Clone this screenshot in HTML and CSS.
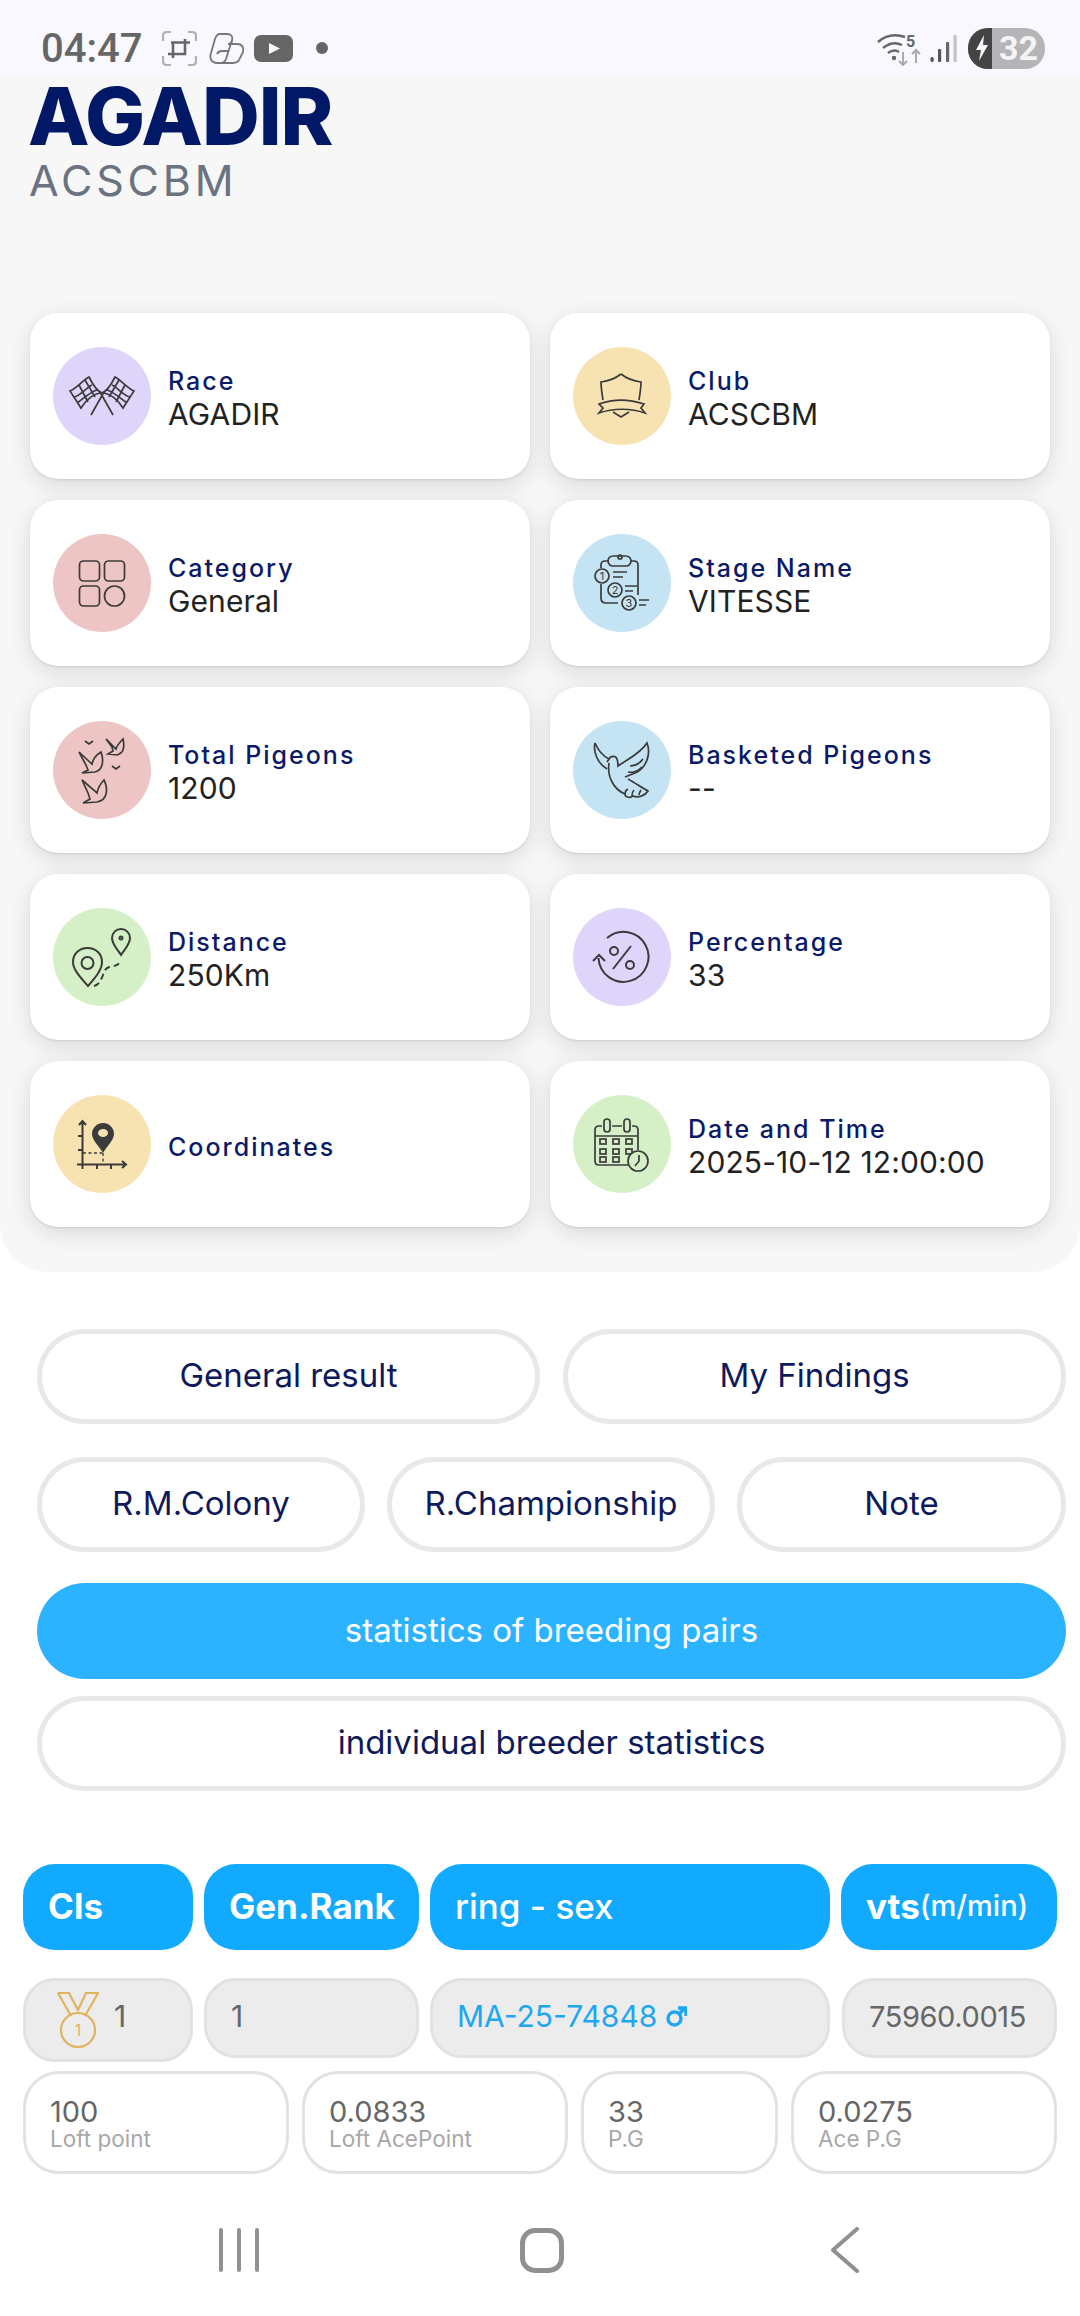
FILE: index.html
```html
<!DOCTYPE html>
<html lang="en">
<head>
    <meta charset="UTF-8">
    <meta name="viewport" content="width=device-width, initial-scale=1.0">
    <title>AGADIR</title>
    <link rel="stylesheet" href="styles.css">
</head>
<body>
    <div class="status">
        <div class="status-left">
            <span class="time">04:47</span>
            <svg class="st-shot" viewBox="0 0 35 35" fill="none" stroke="#666">
                <path d="M1 10V5q0-4 4-4h4M26 1h4q4 0 4 4v5M34 25v5q0 4-4 4h-4M9 34H5q-4 0-4-4v-5" stroke="#b0b0b0" stroke-width="2.200"/>
                <path d="M9 11.500h19M23 8v16M6 23h18M11 11v16" stroke-width="2.600"/>
            </svg>
            <svg class="st-copilot" viewBox="0 0 35 31" fill="none" stroke="#777" stroke-width="1.800">
                <path d="M11 1h7c4 0 6 2 5 6l-6 19c-1 3-3 4-6 4H8c-5 0-8-4-6-10L6 6c1-3 3-5 5-5z"/>
                <path d="M19 11h9c5 0 7 3 6 8l-3 6c-1 3-3 5-7 5H11"/>
                <path d="M23 7c0 3-2 4-4 4M8 21c1-2 3-3 5-3h6"/>
            </svg>
            <svg class="st-yt" viewBox="0 0 39 27"><rect width="39" height="27" rx="7" fill="#666"/><path d="M15 8l11 5.500-11 5.500z" fill="#f8f8fe"/></svg>
            <i class="st-dot"></i>
        </div>
        <div class="status-right">
            <svg class="st-wifi" viewBox="0 0 44 36" fill="none" stroke="#666" stroke-width="2.400">
                <path d="M1 12C9 5 19 4 28 7M6 18c6-5 13-6 19-3M11 23c4-3 8-3 11-1"/>
                <circle cx="17" cy="28" r="2.200" fill="#666" stroke="none"/>
                <text x="29" y="17" class="st-five">5</text>
                <path d="M26 22v13M22 31l4 4 4-4" stroke="#aaa" stroke-width="2"/>
                <path d="M39 33V20M35 24l4-4 4 4" stroke="#aaa" stroke-width="2"/>
            </svg>
            <svg class="st-signal" viewBox="0 0 27 27" fill="#555">
                <rect x="0.500" y="22" width="3.200" height="5" rx="1.500"/>
                <rect x="8" y="14" width="3.200" height="13" rx="1"/>
                <rect x="16" y="7" width="3.200" height="20" rx="1" fill="#666"/>
                <rect x="23.500" y="0" width="3.200" height="27" rx="1" fill="#c2c2c2"/>
            </svg>
            <div class="battery">
                <span class="bat-bolt">
                    <svg viewBox="0 0 14 26" width="14" height="26"><path d="M9 0L1 15h5l-2 11 9-16H8z" fill="#f8f8fe"/></svg>
                </span>
                <span class="bat-num">32</span>
            </div>
        </div>
    </div>

    <div class="top">
        <h1 class="title">AGADIR</h1>
        <div class="subtitle">ACSCBM</div>

        <div class="cards">
            <div class="card">
                <div class="circle purple">
                    <svg viewBox="0 0 98 98" class="ico">
                        <path d="M38 68L51 45M60 68L47 45"/>
                        <path d="M17 44c7-3 12-10 19-14 3 6 7 14 13 16-7 0-16 6-21 15zM26 38l9 17M32 33l10 17M20.500 50c7-1 12-9 18.500-12M24 56c6-4 13-11 20-13"/>
                        <path d="M81 44c-7-3-12-10-19-14-3 6-7 14-13 16 7 0 16 6 21 15zM72 38l-9 17M66 33L56 50M77.500 50c-7-1-12-9-18.500-12M74 56c-6-4-13-11-20-13"/>
                    </svg>
                </div>
                <div class="info"><div class="label">Race</div><div class="value">AGADIR</div></div>
            </div>
            <div class="card">
                <div class="circle yellow">
                    <svg viewBox="0 0 98 98" class="ico">
                        <path d="M48 27c-5 4-12 7-20 8 0 6 1 12 2 18M48 27c5 4 12 7 20 8 0 6-1 12-2 18"/>
                        <path d="M26 57c14-5 30-5 45 0l-3 4 4 5c-14-5-32-5-46 0l4-5z"/>
                        <path d="M40 65l8 5 8-5"/>
                    </svg>
                </div>
                <div class="info"><div class="label">Club</div><div class="value">ACSCBM</div></div>
            </div>

            <div class="card">
                <div class="circle pink">
                    <svg viewBox="0 0 98 98" class="ico">
                        <rect x="26.500" y="27" width="20" height="20" rx="4"/>
                        <rect x="51.500" y="27" width="20" height="20" rx="4"/>
                        <rect x="26.500" y="52" width="20" height="20" rx="4"/>
                        <circle cx="61.500" cy="62" r="10"/>
                    </svg>
                </div>
                <div class="info"><div class="label">Category</div><div class="value">General</div></div>
            </div>
            <div class="card">
                <div class="circle blue">
                    <svg viewBox="0 0 98 98" class="ico">
                        <path d="M36 27h-4q-4 0-4 4v3M58 27h3q4 0 4 4v30M28 50v14q0 5 5 5h12"/>
                        <rect x="35" y="22" width="23" height="10" rx="5"/>
                        <circle cx="47" cy="23" r="2"/>
                        <circle cx="29" cy="42" r="7"/>
                        <circle cx="42" cy="56" r="7"/>
                        <circle cx="56" cy="69" r="7"/>
                        <text x="29" y="46" class="ico-num">1</text>
                        <text x="42" y="60" class="ico-num">2</text>
                        <text x="56" y="73" class="ico-num">3</text>
                        <path d="M40 38h14M40 43h10M52 52h12M52 57h8M66 66h10M66 71h7"/>
                    </svg>
                </div>
                <div class="info"><div class="label">Stage Name</div><div class="value">VITESSE</div></div>
            </div>

            <div class="card">
                <div class="circle pink">
                    <svg viewBox="0 0 98 98" class="ico">
                        <path d="M26 31l13 12c1-5 4-9 9-12 2 5 2 9 1 13-1 4-3 6-7 7l-13 1 6-3-2-5z"/>
                        <path d="M53 18l10 10c1-4 4-7 7-10 1 4 1 8 0 11-1 3-3 4-6 5l-9-1 5-3-1-4z"/>
                        <path d="M29 59l15 13c1-5 3-9 7-13 3 6 3 10 2 14-1 5-4 7-9 8l-14 1 7-4-2-6z"/>
                        <path d="M32 20l4 3 4-3M59 45l4 3 4-3"/>
                    </svg>
                </div>
                <div class="info"><div class="label">Total Pigeons</div><div class="value">1200</div></div>
            </div>
            <div class="card">
                <div class="circle blue">
                    <svg viewBox="0 0 98 98" class="ico">
                        <path d="M22 22c-2 8 2 20 12 26M22 22c3 7 8 13 14 16"/>
                        <path d="M34 41l2-3c2-4 7-3 8 0 1 3 1 5 1 7 10-7 23-13 29-23 4 10 0 25-12 30l-10 4"/>
                        <path d="M36 42c-2 13 4 26 16 31 0 4 6 4 8 2 5 2 12 0 15-5-7-4-13-8-20-12"/>
                        <path d="M57 45c5 0 10-3 13-7M55 51c5 1 10-1 14-5M52 73c0-2 1-4 3-5M59 75c0-3 1-5 2-6M66 74c0-2 1-3 2-5"/>
                    </svg>
                </div>
                <div class="info"><div class="label">Basketed Pigeons</div><div class="value">--</div></div>
            </div>

            <div class="card">
                <div class="circle green">
                    <svg viewBox="0 0 98 98" class="ico thick">
                        <path d="M35 78C28 70 20 62 20 54c0-8 6-14 14.500-14S49 46 49 54c0 8-7 16-14 24z"/>
                        <circle cx="34.500" cy="55" r="6"/>
                        <path d="M68 47c-4-6-9-11-9-17 0-5 4-9 9-9s9 4 9 9c0 6-5 11-9 17z"/>
                        <circle cx="68" cy="30" r="1.500"/>
                        <path d="M41 78c5-1 7-6 9-11 1-6 5-8 9-9 4 0 7-1 9-6" stroke-dasharray="6 4"/>
                    </svg>
                </div>
                <div class="info"><div class="label">Distance</div><div class="value">250Km</div></div>
            </div>
            <div class="card">
                <div class="circle purple">
                    <svg viewBox="0 0 98 98" class="ico thick">
                        <path d="M34 30A25 25 0 1 1 25.500 50"/>
                        <path d="M20 53l6-6 6 6"/>
                        <circle cx="41" cy="43" r="4"/>
                        <circle cx="57" cy="57" r="4"/>
                        <path d="M58 38L40 61"/>
                    </svg>
                </div>
                <div class="info"><div class="label">Percentage</div><div class="value">33</div></div>
            </div>

            <div class="card">
                <div class="circle yellow">
                    <svg viewBox="0 0 98 98" class="ico thick">
                        <path d="M29.500 74V26M26 30l3.500-4 3.500 4M24 69.500h49M69 66l4 3.500-4 3.500M25 41h5M25 55h5M44 69v5M58 69v5"/>
                        <path d="M30 58h20M50 58v10" stroke-dasharray="3 2.500" stroke-width="1.300"/>
                        <path d="M50 56c-5-8-10-11-10-17a10 10 0 0 1 20 0c0 6-5 9-10 17z" fill="#3b3b3b"/>
                        <ellipse cx="50" cy="38" rx="5" ry="4" fill="#f7e3b1" stroke="none"/>
                    </svg>
                </div>
                <div class="info"><div class="label">Coordinates</div></div>
            </div>
            <div class="card">
                <div class="circle green">
                    <svg viewBox="0 0 98 98" class="ico">
                        <path d="M29 31h-3q-4 0-4 4v31q0 4 4 4h30M39 31h10M59 31h2q4 0 4 4v20M22 41h43"/>
                        <rect x="31" y="24" width="6" height="13" rx="3"/>
                        <rect x="51" y="24" width="6" height="13" rx="3"/>
                        <rect x="27" y="44" width="6" height="5"/><rect x="40" y="44" width="6" height="5"/><rect x="53" y="44" width="6" height="5"/>
                        <rect x="27" y="54" width="6" height="5"/><rect x="40" y="54" width="6" height="5"/><rect x="53" y="54" width="6" height="5"/>
                        <rect x="27" y="62" width="6" height="5"/><rect x="40" y="62" width="6" height="5"/>
                        <circle cx="65" cy="66" r="10" fill="#d5f0c6"/>
                        <path d="M66 60v6l-4 5"/>
                    </svg>
                </div>
                <div class="info"><div class="label">Date and Time</div><div class="value">2025-10-12 12:00:00</div></div>
            </div>
        </div>
    </div>

    <div class="actions">
        <div class="btn-row">
            <div class="btn">General result</div>
            <div class="btn">My Findings</div>
        </div>
        <div class="btn-row three">
            <div class="btn">R.M.Colony</div>
            <div class="btn">R.Championship</div>
            <div class="btn">Note</div>
        </div>
        <div class="btn active">statistics of breeding pairs</div>
        <div class="btn lower">individual breeder statistics</div>
    </div>

    <div class="table">
        <div class="thead">
            <div class="th bold">Cls</div>
            <div class="th bold">Gen.Rank</div>
            <div class="th">ring - sex</div>
            <div class="th bold vts">vts<small>(m/min)</small></div>
        </div>
        <div class="trow">
            <div class="td medal-cell">
                <svg class="medal" viewBox="0 0 42 56" fill="none" stroke="#e0b35e" stroke-width="2.200">
                    <path d="M1 1h11l9 17 8-17h12L28 24M1 1l13 23"/>
                    <circle cx="21" cy="38" r="17"/>
                    <text x="21" y="44" class="medal-num">1</text>
                </svg>
                <span>1</span>
            </div>
            <div class="td">1</div>
            <div class="td ring">MA-25-74848
                <svg class="male" viewBox="0 0 21 21" fill="none" stroke="#1ea7f0" stroke-width="3.400">
                    <circle cx="8.500" cy="12.500" r="6.500"/>
                    <path d="M13 8l6-6M12 2h8v8"/>
                </svg>
            </div>
            <div class="td speed">75960.0015</div>
        </div>
        <div class="tstats">
            <div class="stat"><div class="stat-val">100</div><div class="stat-lbl">Loft point</div></div>
            <div class="stat"><div class="stat-val">0.0833</div><div class="stat-lbl">Loft AcePoint</div></div>
            <div class="stat"><div class="stat-val">33</div><div class="stat-lbl">P.G</div></div>
            <div class="stat"><div class="stat-val">0.0275</div><div class="stat-lbl">Ace P.G</div></div>
        </div>
    </div>

    <div class="navbar">
        <svg class="nav-recent" viewBox="0 0 42 44" fill="none" stroke="#909090" stroke-width="4" stroke-linecap="round">
            <path d="M3 2v40M21 2v40M39 2v40"/>
        </svg>
        <i class="nav-home"></i>
        <svg class="nav-back" viewBox="0 0 28 46" fill="none" stroke="#909090" stroke-width="4" stroke-linecap="round" stroke-linejoin="round">
            <path d="M26 2L2 23l24 21"/>
        </svg>
    </div>
</body>
</html>
```

FILE: styles.css
```css
*{
    padding: 0;
    margin: 0;
    box-sizing: border-box;
}
body{
    width: 1080px;
    height: 2316px;
    background: #fff;
    font-family: "Inter", "Noto Sans", sans-serif;
    overflow: hidden;
}

/* status bar */
.status{
    height: 76px;
    background: #f8f8fe;
    display: flex;
    justify-content: space-between;
    align-items: center;
    padding: 20px 35px 0 41px;
}
.status-left, .status-right{
    display: flex;
    align-items: center;
}
.time{
    font-family: "Roboto", sans-serif;
    font-size: 40px;
    font-weight: 500;
    color: #666;
    width: 121px;
}
.st-shot{ width: 35px; height: 35px; margin-right: 12px; }
.st-copilot{ width: 35px; height: 31px; margin-right: 10px; }
.st-yt{ width: 39px; height: 27px; margin-right: 23px; }
.st-dot{ width: 12px; height: 12px; border-radius: 50%; background: #666; }
.st-wifi{ width: 44px; height: 36px; margin-right: 9px; }
.st-signal{ width: 27px; height: 27px; margin-right: 11px; }
.st-five{ font-family: "Roboto", sans-serif; font-size: 16px; font-weight: 700; fill: #666; stroke: none; }
.battery{
    width: 77px;
    height: 41px;
    border-radius: 20px;
    overflow: hidden;
    display: flex;
    background: #b5b5b8;
}
.bat-bolt{
    width: 24px;
    background: #444;
    display: flex;
    align-items: center;
    justify-content: center;
    padding-left: 3px;
}
.bat-num{
    flex: 1;
    font-family: "Roboto", sans-serif;
    font-size: 34px;
    font-weight: 700;
    line-height: 41px;
    color: #f4f4f6;
    text-align: center;
}

/* top panel */
.top{
    height: 1196px;
    background: #f7f7f7;
    border-radius: 0 0 48px 48px;
    padding: 0 30px;
}
.title{
    font-size: 80px;
    font-weight: 800;
    line-height: 80px;
    color: #001866;
    letter-spacing: -1px;
    margin-left: -2px;
}
.subtitle{
    font-size: 43px;
    font-weight: 400;
    line-height: 44px;
    margin: 2px 0 0 -1px;
    color: #6b7280;
    letter-spacing: 3.800px;
}
.cards{
    display: grid;
    grid-template-columns: 500px 500px;
    grid-auto-rows: 166px;
    gap: 21px 20px;
    margin-top: 111px;
}
.card{
    background: #fff;
    border-radius: 28px;
    box-shadow: 0 1px 2px rgba(20, 20, 40, .1), 0 6px 22px rgba(20, 20, 40, .13);
    display: flex;
    align-items: center;
    padding-left: 23px;
}
.circle{
    width: 98px;
    height: 98px;
    border-radius: 50%;
    flex-shrink: 0;
}
.purple{ background: #dfd5fb; }
.yellow{ background: #f7e3b1; }
.pink{ background: #edc5c5; }
.blue{ background: #c4e3f3; }
.green{ background: #d5f0c6; }
.ico{
    width: 98px;
    height: 98px;
    display: block;
    fill: none;
    stroke: #3b3b3b;
    stroke-width: 1.700;
}
.ico.thick{ stroke-width: 2; }
.ico-num{
    font-family: "Inter", sans-serif;
    font-size: 11px;
    text-anchor: middle;
    fill: #3b3b3b;
    stroke: none;
}
.info{ margin-left: 17px; padding-top: 6px; }
.label{
    font-size: 25px;
    font-weight: 500;
    line-height: 30px;
    color: #0b1a66;
    letter-spacing: 2px;
}
.value{
    font-size: 30px;
    font-weight: 400;
    line-height: 37px;
    color: #222;
    letter-spacing: .1px;
}

/* buttons */
.actions{
    padding: 57px 14px 0 37px;
}
.btn-row{
    display: grid;
    grid-template-columns: 503px 503px;
    column-gap: 23px;
    margin-bottom: 33px;
}
.btn-row.three{
    grid-template-columns: 328px 328px 329px;
    column-gap: 22px;
    margin-bottom: 31px;
}
.btn{
    height: 95px;
    border: 5px solid #e8e8e8;
    border-radius: 48px;
    background: #fff;
    color: #0f1a5c;
    font-size: 33px;
    padding-bottom: 3px;
    display: flex;
    align-items: center;
    justify-content: center;
}
.btn.active{
    background: #2bb3ff;
    border: none;
    color: #fff;
    height: 96px;
}
.btn.lower{ margin-top: 17px; }

/* result table */
.table{
    padding: 73px 22px 0 23px;
}
.thead{
    display: grid;
    grid-template-columns: 170px 215px 400px 216px;
    column-gap: 11px;
}
.th{
    height: 86px;
    border-radius: 32px;
    background: #12aaff;
    color: #fff;
    font-size: 35px;
    font-weight: 500;
    display: flex;
    align-items: center;
    padding: 0 0 3px 25px;
}
.th.bold{ font-weight: 700; }
.vts small{
    font-size: 29px;
    font-weight: 500;
}
.trow{
    display: grid;
    grid-template-columns: 170px 215px 400px 216px;
    column-gap: 11px;
    align-items: start;
    margin-top: 28px;
}
.td{
    height: 80px;
    border: 3px solid #e2e2e2;
    border-radius: 32px;
    background: #ececec;
    color: #666;
    font-size: 30px;
    display: flex;
    align-items: center;
    padding: 0 0 4px 24px;
}
.medal-cell{
    height: 84px;
    padding: 0 0 0 31px;
    gap: 15px;
}
.medal-cell span{ padding-bottom: 8px; }
.medal{ width: 42px; height: 56px; }
.medal-num{
    font-family: "Inter", sans-serif;
    font-size: 16px;
    text-anchor: middle;
    fill: #e0b35e;
    stroke: none;
}
.ring{ color: #1ea7f0; gap: 9px; }
.male{ width: 21px; height: 21px; }
.speed{
    font-size: 29px;
    letter-spacing: -.400px;
    margin-left: 1px;
}
.tstats{
    display: grid;
    grid-template-columns: 266px 266px 197px 266px;
    column-gap: 13px;
    margin-top: 9px;
}
.stat{
    height: 103px;
    border: 3px solid #e2e2e2;
    border-radius: 36px;
    padding: 23px 0 0 24px;
}
.stat-val{
    font-size: 29px;
    line-height: 29px;
    color: #666;
}
.stat-lbl{
    font-size: 22.500px;
    line-height: 25px;
    color: #a8a8a8;
}

/* android nav */
.navbar{
    display: flex;
    align-items: center;
    padding: 53px 0 0 218px;
}
.nav-recent{ width: 42px; height: 44px; margin-right: 260px; }
.nav-home{
    width: 44px;
    height: 45px;
    border: 5px solid #909090;
    border-radius: 15px;
    margin-right: 267px;
}
.nav-back{ width: 28px; height: 46px; }
```
